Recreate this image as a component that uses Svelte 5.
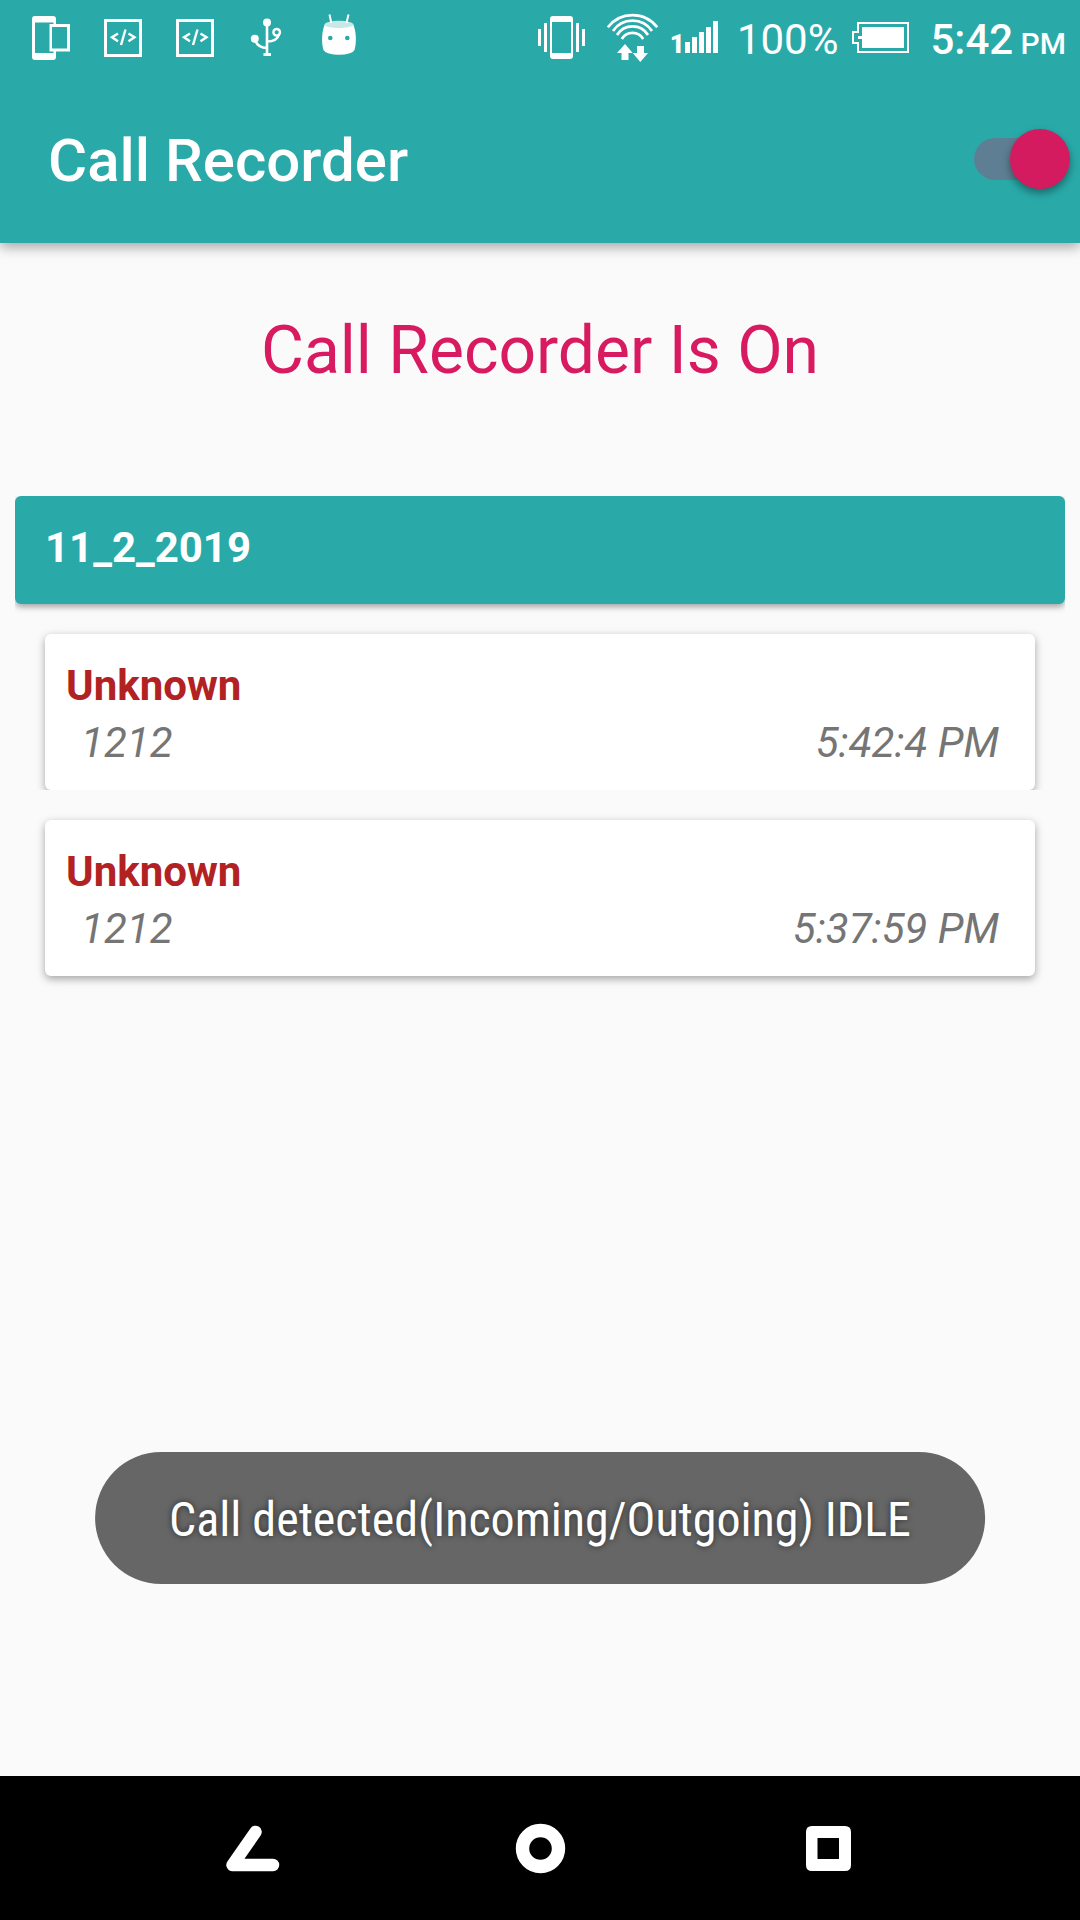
<script>
  let recording = $state(true);

  const groups = [
    {
      date: '11_2_2019',
      calls: [
        { name: 'Unknown', number: '1212', time: '5:42:4 PM' },
        { name: 'Unknown', number: '1212', time: '5:37:59 PM' }
      ]
    }
  ];
</script>

{#snippet codeIcon()}
  <svg class="slot" viewBox="0 0 72 75" aria-hidden="true">
    <rect x="18.5" y="20.5" width="35" height="35" fill="none" stroke="#fff" stroke-width="3" />
    <path d="M31 33.5L25 37.3L31 41.2M41.5 33.5L47.5 37.3L41.5 41.2M38.5 29.5L34 45" fill="none" stroke="#fff" stroke-width="2.4" />
  </svg>
{/snippet}

<div class="screen">
  <div class="top">
    <div class="status">
      <div class="notifications">
        <svg class="slot" viewBox="0 0 72 75" aria-hidden="true">
          <path fill="#fff" fill-rule="evenodd" d="M20 16H38Q41 16 41 19V24H55V51.5H41V57Q41 60 38 60H20Q17 60 17 57V19Q17 16 20 16ZM20 22.5V53H38.5V51.5H34.5V24H38.5V22.5ZM37 27V48.5H52V27Z" />
        </svg>
        {@render codeIcon()}
        {@render codeIcon()}
        <svg class="slot" viewBox="0 0 72 75" aria-hidden="true">
          <circle cx="36" cy="22.5" r="4" fill="#fff" />
          <circle cx="23.8" cy="38.8" r="4" fill="#fff" />
          <circle cx="45.7" cy="32.3" r="3.3" fill="none" stroke="#fff" stroke-width="2.4" />
          <path d="M36 22V55M24 40Q27 48 36 48M48 34.5Q46 41.5 36 41.5" fill="none" stroke="#fff" stroke-width="2.6" />
          <rect x="32.5" y="53" width="7.5" height="3" fill="#fff" />
        </svg>
        <svg class="slot" viewBox="0 0 72 75" aria-hidden="true">
          <path d="M22 24Q36 29 50 24C53 30 54 42 51.5 50Q50 52.5 47 53.2Q36 56.5 25 53.2Q22 52.5 20.5 50C18 42 19 30 22 24Z" fill="#fff" />
          <ellipse cx="36" cy="24.5" rx="14.5" ry="3.7" fill="#c9e9e9" />
          <path d="M26.5 14.5L28.3 23M45.5 14.5L43.5 23" stroke="#fff" stroke-width="2" />
          <circle cx="27.3" cy="38" r="2.3" fill="#29aaa9" />
          <circle cx="44.3" cy="38" r="2.3" fill="#29aaa9" />
        </svg>
      </div>
      <div class="system">
        <svg width="55" height="75" viewBox="0 0 55 75" aria-hidden="true">
          <path fill="#fff" fill-rule="evenodd" d="M15 16H32Q35 16 35 19V56Q35 59 32 59H15Q12 59 12 56V19Q12 16 15 16ZM14 22V53H33V22Z" />
          <path fill="#fff" d="M0 29h3v17h-3zM6 23h3v29h-3zM38 23h3v29h-3zM44 29h3v17h-3z" />
        </svg>
        <svg width="52" height="75" viewBox="0 0 52 75" aria-hidden="true">
          <path d="M.8 27.3A31 31 0 0 1 50.2 27.3M6 31A23.5 23.5 0 0 1 45 31M10 35A18.3 18.3 0 0 1 41 35M14.8 39A12.5 12.5 0 0 1 36.2 39" fill="none" stroke="#fff" stroke-width="2.7" />
          <path fill="#fff" d="M18 44L25.7 53H21.5V60H14.5V53H10ZM30 46H37V53H41L33.3 62L25.7 53H30Z" />
        </svg>
        <div class="signal">
          <span class="sim">1</span>
          <svg width="38" height="75" viewBox="0 0 38 75" aria-hidden="true">
            <path fill="#fff" d="M0 42h5v11h-5zM7 37h5v16h-5zM14 32h5v21h-5zM21 27h5v26h-5zM28 21h5v32h-5z" />
          </svg>
        </div>
        <span class="percent">100%</span>
        <svg width="64" height="75" viewBox="0 0 64 75" aria-hidden="true">
          <path d="M6 23H56V52H6V43H1V32H6Z" fill="none" stroke="#fff" stroke-width="2" />
          <path fill="#fff" d="M10 27H52V48H10V39H6V36H10Z" />
        </svg>
        <span class="clock">5:42<small>&nbsp;PM</small></span>
      </div>
    </div>
    <header class="appbar">
      <h1>Call Recorder</h1>
      <input type="checkbox" role="switch" aria-label="Call recording" bind:checked={recording} />
    </header>
  </div>

  <main>
    <p class="state">Call Recorder Is {recording ? 'On' : 'Off'}</p>
    {#each groups as group}
      <section>
        <h2>{group.date}</h2>
        <ul>
          {#each group.calls as call}
            <li>
              <strong>{call.name}</strong>
              <div class="detail">
                <span>{call.number}</span>
                <time>{call.time}</time>
              </div>
            </li>
          {/each}
        </ul>
      </section>
    {/each}
  </main>

  <div class="toast" role="status">Call detected(Incoming/Outgoing) IDLE</div>

  <nav>
    <button aria-label="Back">
      <svg width="72" height="72" viewBox="0 0 72 72" aria-hidden="true">
        <path d="M39.5 20L16.5 53H57" fill="none" stroke="#fff" stroke-width="12.5" stroke-linecap="round" stroke-linejoin="round" />
      </svg>
    </button>
    <button aria-label="Home">
      <svg width="72" height="72" viewBox="0 0 72 72" aria-hidden="true">
        <circle cx="36.5" cy="36.5" r="18" fill="none" stroke="#fff" stroke-width="13.4" />
      </svg>
    </button>
    <button aria-label="Recent apps">
      <svg width="72" height="72" viewBox="0 0 72 72" aria-hidden="true">
        <path fill="#fff" fill-rule="evenodd" d="M20 14H53Q59 14 59 20V53Q59 59 53 59H20Q14 59 14 53V20Q14 14 20 14ZM25.5 26V47H47V26Z" />
      </svg>
    </button>
  </nav>
</div>

<style>
  :global(body) {
    margin: 0;
  }
  .screen {
    position: relative;
    display: flex;
    flex-direction: column;
    min-height: 100vh;
    background: #fafafa;
    font-family: Roboto, 'Liberation Sans', sans-serif;
    font-size: 42px;
    line-height: 57px;
  }
  svg {
    display: block;
    flex: none;
  }
  h1, h2, p, ul {
    margin: 0;
    padding: 0;
  }
  .top {
    background: #29aaa9;
    color: #fff;
    box-shadow: 0 4px 12px rgba(0, 0, 0, 0.35);
  }
  .status {
    display: flex;
    justify-content: space-between;
    height: 75px;
    padding: 0 14px 0 15px;
  }
  .notifications, .system {
    display: flex;
    align-items: center;
  }
  .system {
    gap: 14px;
    white-space: nowrap;
  }
  .slot {
    width: 72px;
    height: 75px;
  }
  .signal {
    display: flex;
    align-items: center;
    justify-content: flex-end;
    width: 50px;
  }
  .sim {
    padding-top: 12px;
    font-size: 26px;
    line-height: 30px;
    font-weight: 900;
  }
  .percent, .clock {
    padding-top: 4px;
  }
  .clock {
    font-weight: 500;
  }
  small {
    font-size: 30px;
    line-height: 30px;
  }
  .appbar {
    display: flex;
    align-items: center;
    justify-content: space-between;
    height: 168px;
    padding: 0 10px 0 48px;
  }
  h1 {
    padding-top: 4px;
    font-size: 60px;
    line-height: 72px;
    font-weight: 500;
  }
  input {
    appearance: none;
    display: grid;
    align-items: center;
    width: 96px;
    height: 60px;
    margin: 0;
  }
  input::before, input::after {
    content: '';
    grid-area: 1 / 1;
  }
  input::before {
    width: 88px;
    height: 42px;
    border-radius: 21px;
    background: rgba(0, 0, 0, 0.26);
  }
  input:checked::before {
    background: #5e7f93;
  }
  input::after {
    width: 60px;
    height: 60px;
    border-radius: 50%;
    background: #fafafa;
    box-shadow: 0 4px 8px rgba(0, 0, 0, 0.4);
  }
  input:checked::after {
    justify-self: end;
    background: #d41b5f;
  }
  main {
    flex: 1;
    padding: 0 15px;
  }
  .state {
    padding: 68px 0 105px;
    color: #d81b60;
    font-size: 66px;
    line-height: 80px;
    text-align: center;
  }
  h2 {
    padding: 23px 30px 28px;
    border-radius: 6px;
    background: #29aaa9;
    color: #fff;
    font-size: 42px;
    font-weight: 700;
    box-shadow: 0 3px 6px rgba(0, 0, 0, 0.35);
    clip-path: inset(0 0 -12px 0);
  }
  ul {
    display: grid;
    gap: 30px;
    padding: 30px;
    list-style: none;
  }
  li {
    padding: 23px 36px 19px 21px;
    border-radius: 6px;
    background: #fff;
    box-shadow: 0 3px 8px rgba(0, 0, 0, 0.35);
  }
  li:not(:last-child) {
    clip-path: inset(-12px -12px 0 -12px);
  }
  strong {
    display: block;
    color: #b22222;
    font-weight: 700;
  }
  .detail {
    display: flex;
    justify-content: space-between;
    padding-left: 15px;
    color: #757575;
    font-style: italic;
  }
  .toast {
    position: absolute;
    bottom: 336px;
    left: 50%;
    transform: translateX(-50%);
    padding: 38px 74px 34px;
    border-radius: 66px;
    background: #666;
    color: #fff;
    font-family: 'Roboto Condensed', Roboto, sans-serif;
    font-size: 48px;
    line-height: 60px;
    text-shadow: 0 0 6px rgba(0, 0, 0, 0.6);
    white-space: nowrap;
  }
  nav {
    display: grid;
    grid-template-columns: repeat(3, 1fr);
    height: 144px;
    padding: 0 10%;
    background: #000;
  }
  button {
    display: grid;
    place-items: center;
    padding: 0;
    border: 0;
    background: none;
  }
</style>
